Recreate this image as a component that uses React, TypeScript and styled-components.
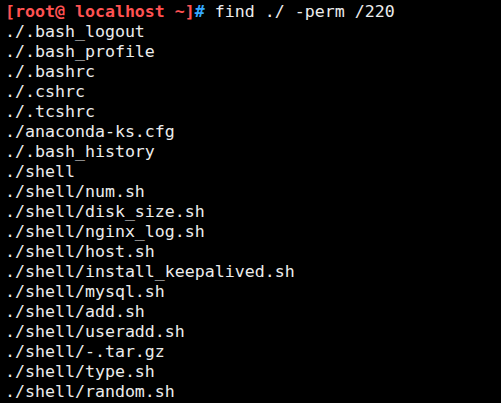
import React from "react";
import styled, { createGlobalStyle } from "styled-components";

const Global = createGlobalStyle`
  html, body { margin: 0; padding: 0; background: #000; }
  body { width: 501px; height: 403px; overflow: hidden; }
`;

const Terminal = styled.div`
  width: 501px;
  height: 403px;
  box-sizing: border-box;
  background: #000;
  padding: 2px 0 0 5px;
  font-family: "DejaVu Sans Mono", "Liberation Mono", monospace;
  font-size: 16.6px;
  line-height: 20px;
  color: #ececec;
  display: flex;
  flex-direction: column;
`;

const Line = styled.div`
  white-space: pre;
  height: 20px;
`;

const Prompt = styled.span`
  color: #ff5252;
  font-weight: bold;
`;

const Hash = styled.span`
  color: #35a8ff;
  font-weight: bold;
`;

const files = [
  "./.bash_logout",
  "./.bash_profile",
  "./.bashrc",
  "./.cshrc",
  "./.tcshrc",
  "./anaconda-ks.cfg",
  "./.bash_history",
  "./shell",
  "./shell/num.sh",
  "./shell/disk_size.sh",
  "./shell/nginx_log.sh",
  "./shell/host.sh",
  "./shell/install_keepalived.sh",
  "./shell/mysql.sh",
  "./shell/add.sh",
  "./shell/useradd.sh",
  "./shell/-.tar.gz",
  "./shell/type.sh",
  "./shell/random.sh",
];

export default function App() {
  return (
    <>
      <Global />
      <Terminal>
        <Line>
          <Prompt>[root@ localhost ~]</Prompt>
          <Hash>#</Hash> find ./ -perm /220
        </Line>
        {files.map((f) => (
          <Line key={f}>{f}</Line>
        ))}
      </Terminal>
    </>
  );
}
